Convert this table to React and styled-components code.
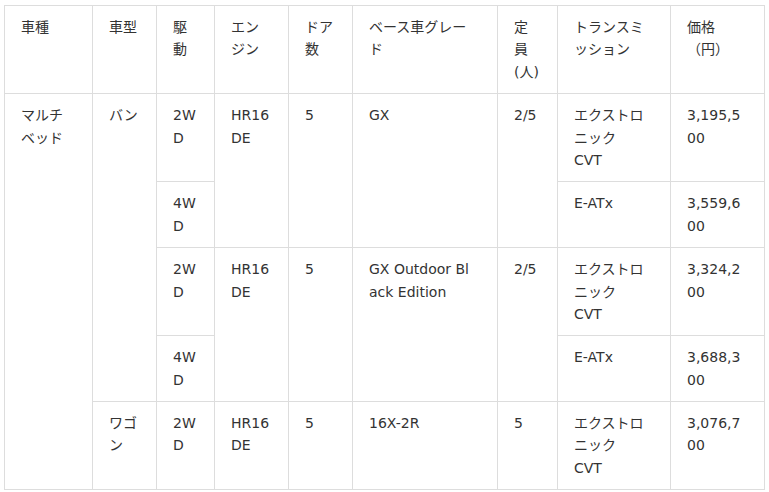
import styled, { createGlobalStyle } from "styled-components";

const GlobalStyle = createGlobalStyle`
  body {
    margin: 5px 0 0 4px;
    background: #fff;
    font-family: "DejaVu Sans", "Noto Sans CJK JP", sans-serif;
    color: #333;
  }
`;

const SpecTable = styled.table`
  width: 760px;
  table-layout: fixed;
  border-collapse: collapse;
  font-size: 14px;
  line-height: 1.6;
`;

const Cell = styled.td`
  border: 1px solid #ddd;
  padding: 10px ${(p) => p.$padRight ?? 16}px 10px 16px;
  vertical-align: top;
  text-align: left;
  font-weight: normal;
  word-break: break-all;
`;

const HeadCell = styled(Cell).attrs({ as: "th" })``;

const columns = [88, 64, 58, 74, 64, 145, 60, 113, 94];

const CVT = () => (
  <>
    エクストロニック
    <br />
    CVT
  </>
);

export default function App() {
  return (
    <>
      <GlobalStyle />
      <SpecTable>
        <colgroup>
          {columns.map((w, i) => (
            <col key={i} style={{ width: w }} />
          ))}
        </colgroup>
        <thead>
          <tr>
            <HeadCell>車種</HeadCell>
            <HeadCell>車型</HeadCell>
            <HeadCell>駆動</HeadCell>
            <HeadCell>エンジン</HeadCell>
            <HeadCell>ドア数</HeadCell>
            <HeadCell $padRight={24}>ベース車グレード</HeadCell>
            <HeadCell>定員(人)</HeadCell>
            <HeadCell>トランスミッション</HeadCell>
            <HeadCell>
              価格
              <br />
              （円）
            </HeadCell>
          </tr>
        </thead>
        <tbody>
          <tr>
            <Cell rowSpan={5}>マルチベッド</Cell>
            <Cell rowSpan={4}>バン</Cell>
            <Cell>2WD</Cell>
            <Cell rowSpan={2}>HR16DE</Cell>
            <Cell rowSpan={2}>5</Cell>
            <Cell rowSpan={2} $padRight={24}>
              GX
            </Cell>
            <Cell rowSpan={2}>2/5</Cell>
            <Cell>
              <CVT />
            </Cell>
            <Cell>3,195,500</Cell>
          </tr>
          <tr>
            <Cell>4WD</Cell>
            <Cell>E-ATx</Cell>
            <Cell>3,559,600</Cell>
          </tr>
          <tr>
            <Cell>2WD</Cell>
            <Cell rowSpan={2}>HR16DE</Cell>
            <Cell rowSpan={2}>5</Cell>
            <Cell rowSpan={2} $padRight={24}>
              GX Outdoor Black Edition
            </Cell>
            <Cell rowSpan={2}>2/5</Cell>
            <Cell>
              <CVT />
            </Cell>
            <Cell>3,324,200</Cell>
          </tr>
          <tr>
            <Cell>4WD</Cell>
            <Cell>E-ATx</Cell>
            <Cell>3,688,300</Cell>
          </tr>
          <tr>
            <Cell>ワゴン</Cell>
            <Cell>2WD</Cell>
            <Cell>HR16DE</Cell>
            <Cell>5</Cell>
            <Cell $padRight={24}>16X-2R</Cell>
            <Cell>5</Cell>
            <Cell>
              <CVT />
            </Cell>
            <Cell>3,076,700</Cell>
          </tr>
        </tbody>
      </SpecTable>
    </>
  );
}
